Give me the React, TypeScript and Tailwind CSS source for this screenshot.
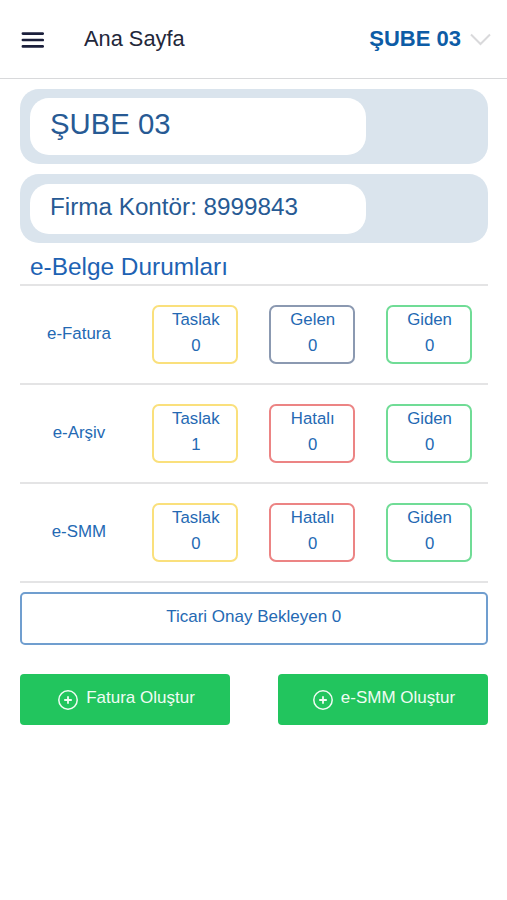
const BORDERS = {
  yellow: 'border-[#fae07c]',
  slate: 'border-[#8b99b1]',
  red: 'border-[#ec8484]',
  green: 'border-[#70dc96]',
};

type Tone = keyof typeof BORDERS;
type Counter = { label: string; count: number; tone: Tone };

const ROWS: { name: string; counters: Counter[] }[] = [
  {
    name: 'e-Fatura',
    counters: [
      { label: 'Taslak', count: 0, tone: 'yellow' },
      { label: 'Gelen', count: 0, tone: 'slate' },
      { label: 'Giden', count: 0, tone: 'green' },
    ],
  },
  {
    name: 'e-Arşiv',
    counters: [
      { label: 'Taslak', count: 1, tone: 'yellow' },
      { label: 'Hatalı', count: 0, tone: 'red' },
      { label: 'Giden', count: 0, tone: 'green' },
    ],
  },
  {
    name: 'e-SMM',
    counters: [
      { label: 'Taslak', count: 0, tone: 'yellow' },
      { label: 'Hatalı', count: 0, tone: 'red' },
      { label: 'Giden', count: 0, tone: 'green' },
    ],
  },
];

function Header() {
  return (
    <header className="flex h-[79px] items-start border-b border-[#d8d9db] pt-[25px] pr-[16px] pl-[21px]">
      <button aria-label="Menü" className="mt-[7px]">
        <svg width="23" height="16" viewBox="0 0 23 16" stroke="#1b1f3b" strokeWidth="2.7" strokeLinecap="round">
          <path d="M1.9 1.6h19.8M1.9 8h19.8M1.9 14.4h19.8" />
        </svg>
      </button>
      <h1 className="ml-10 text-[21.8px] leading-7 text-[#23273a]">Ana Sayfa</h1>
      <button className="ml-auto flex items-start gap-[9px] text-[22px] leading-7 font-bold text-[#0d5ca6]">
        ŞUBE 03
        <svg width="21" height="13" viewBox="0 0 21 13" fill="none" className="mt-[8px]">
          <path d="M1 1.5 10.5 11 20 1.5" stroke="#d9d9db" strokeWidth="2" />
        </svg>
      </button>
    </header>
  );
}

function CounterBox({ label, count, tone }: Counter) {
  return (
    <button
      className={`flex h-[59px] w-[86px] flex-col items-center rounded-[7px] border-2 pl-px text-[16.8px] leading-[25.5px] ${BORDERS[tone]}`}
    >
      <span>{label}</span>
      <span>{count}</span>
    </button>
  );
}

function CreateButton({ children }: { children: string }) {
  return (
    <button className="flex h-[51px] w-[210px] items-start justify-center gap-2 rounded-[4px] bg-[#22c55e] pt-3 pl-[3px] text-[17px] leading-6 text-[#effcf3]">
      <svg width="20" height="20" viewBox="0 0 20 20" fill="none" stroke="currentColor" strokeWidth="1.5" className="mt-[4px]">
        <circle cx="10" cy="10" r="9.2" />
        <path d="M10 6.2v7.6M6.2 10h7.6" strokeWidth="1.8" />
      </svg>
      {children}
    </button>
  );
}

export default function App() {
  return (
    <div className="min-h-screen bg-white font-['Liberation_Sans',Arial,sans-serif] text-[#2469b3]">
      <Header />
      <main className="px-5 pt-[10px]">
        <div className="w-[467.5px]">
          <div className="h-[75px] rounded-[19px] bg-[#dae4ed] py-[9px] pl-[10px]">
            <div className="h-[57px] w-[336px] rounded-[19px] bg-white pt-2 pl-5 text-[29.3px] leading-9 text-[#275a94]">
              ŞUBE 03
            </div>
          </div>
          <div className="mt-[10px] h-[69px] rounded-[19px] bg-[#dae4ed] py-[10px] pl-[10px]">
            <div className="h-[50px] w-[336px] rounded-[19px] bg-white pt-[7px] pl-5 text-[24.25px] leading-8 text-[#275a94]">
              Firma Kontör: 8999843
            </div>
          </div>

          <h2 className="h-[43px] border-b-2 border-[#e4e4e5] pt-[8px] pl-[10px] text-[24.4px] leading-8 text-[#1d62b3]">
            e-Belge Durumları
          </h2>
          {ROWS.map((row) => (
            <div
              key={row.name}
              className="grid h-[99px] grid-cols-4 items-center justify-items-center border-b-2 border-[#e4e4e5]"
            >
              <span className="pb-0.5 pl-px text-[16.9px]">{row.name}</span>
              {row.counters.map((c) => (
                <CounterBox key={c.label} {...c} />
              ))}
            </div>
          ))}

          <button className="mt-[9px] block h-[53px] w-full rounded-[5px] border-2 border-[#709ecf] pb-[3px] text-[17px]">
            Ticari Onay Bekleyen 0
          </button>
          <div className="mt-[29px] flex justify-between">
            <CreateButton>Fatura Oluştur</CreateButton>
            <CreateButton>e-SMM Oluştur</CreateButton>
          </div>
        </div>
      </main>
    </div>
  );
}
